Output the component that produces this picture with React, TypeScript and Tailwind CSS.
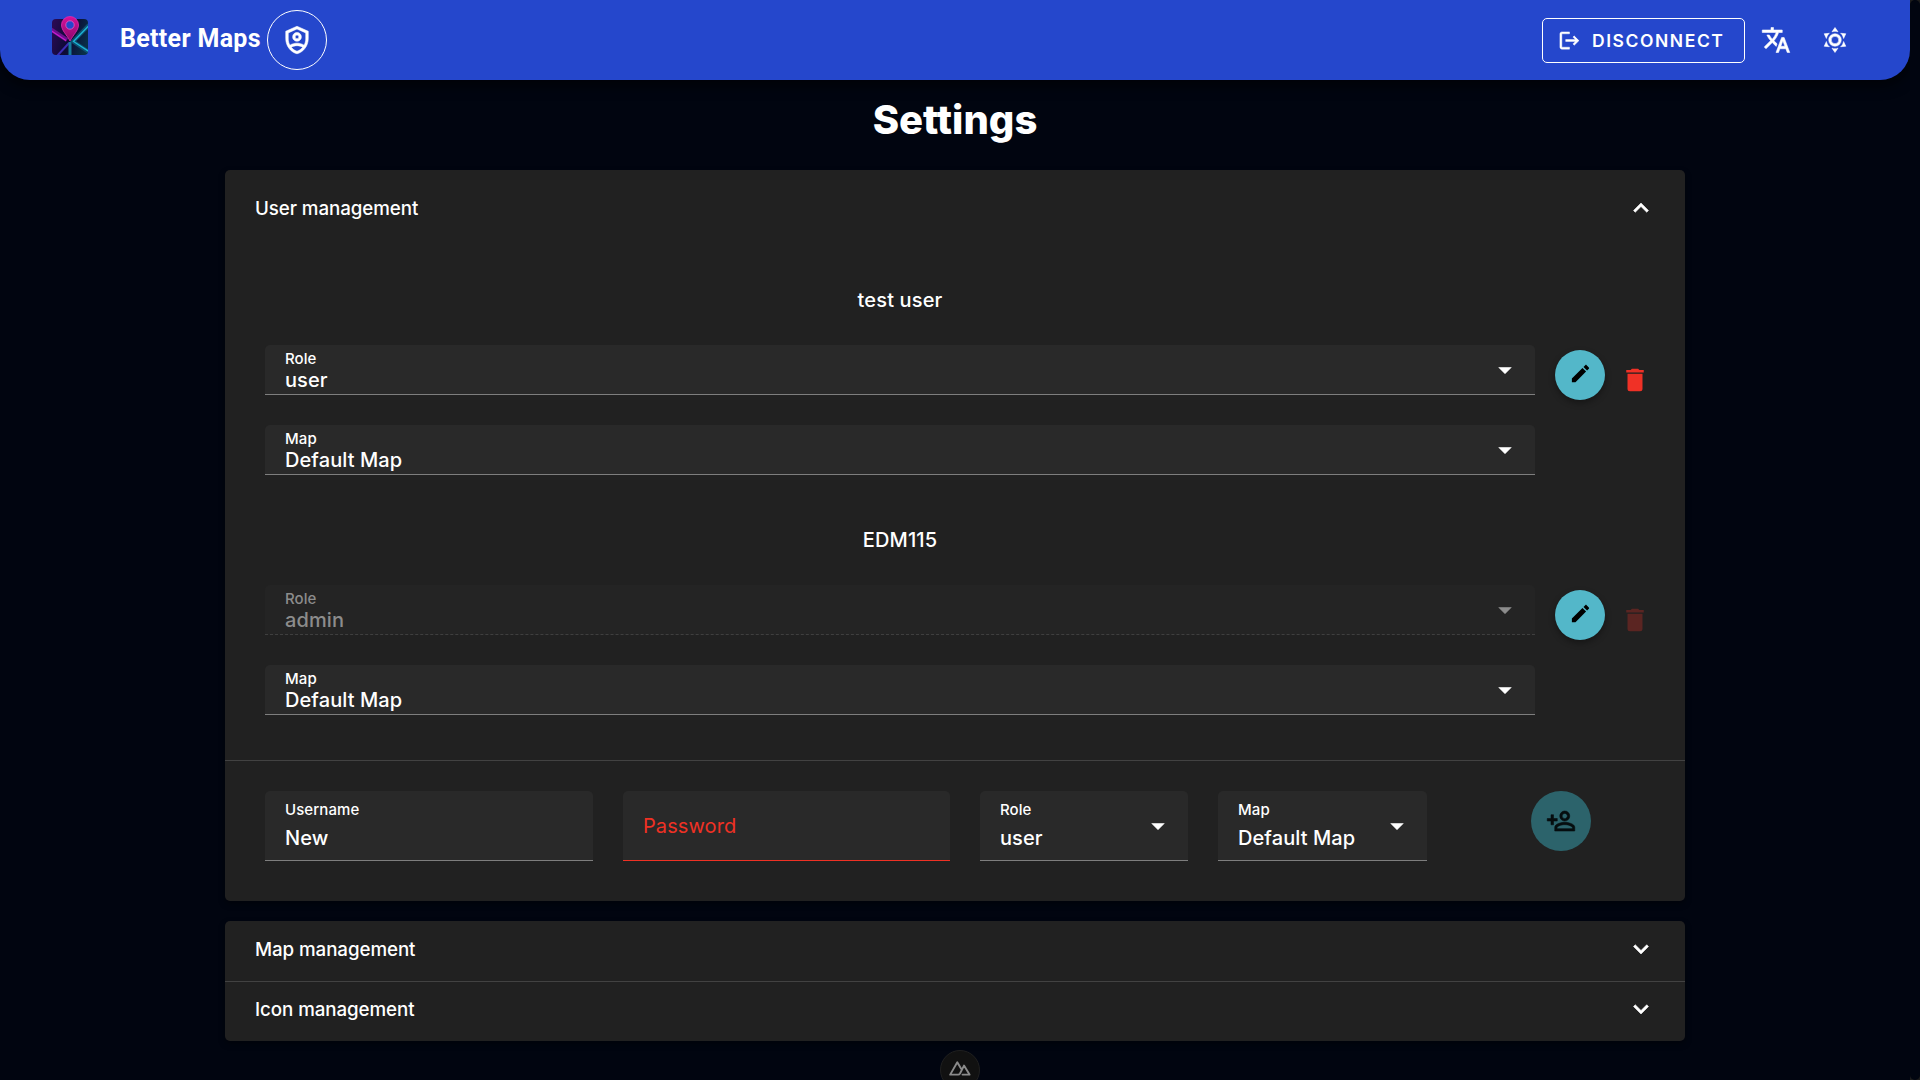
import type { ReactNode } from "react";

const icons = {
  shield:
    "M21,11C21,16.55 17.16,21.74 12,23C6.84,21.74 3,16.55 3,11V5L12,1L21,5V11M12,3.18L5,6.3V11.22C5,12.92 5.5,14.65 6.35,16.18C8,14.94 10.74,14.5 12,14.5C13.26,14.5 16,14.94 17.65,16.18C18.5,14.65 19,12.92 19,11.22V6.3L12,3.18M12,6A3.5,3.5 0 0,1 15.5,9.5A3.5,3.5 0 0,1 12,13A3.5,3.5 0 0,1 8.5,9.5A3.5,3.5 0 0,1 12,6M12,8A1.5,1.5 0 0,0 10.5,9.5A1.5,1.5 0 0,0 12,11A1.5,1.5 0 0,0 13.5,9.5A1.5,1.5 0 0,0 12,8M12,16.5C10.43,16.5 8.37,17.11 7.47,17.84C8.7,19.38 10.3,20.55 12,21C13.7,20.55 15.29,19.38 16.53,17.84C15.64,17.11 13.57,16.5 12,16.5Z",
  logout:
    "M17 7L15.59 8.41L18.17 11H8V13H18.17L15.59 15.58L17 17L22 12M4 5H12V3H4C2.9 3 2 3.9 2 5V19C2 20.1 2.9 21 4 21H12V19H4V5Z",
  translate:
    "M12.87,15.07L10.33,12.56L10.36,12.53C12.1,10.59 13.34,8.36 14.07,6H17V4H10V2H8V4H1V6H12.17C11.5,7.92 10.44,9.75 9,11.35C8.07,10.32 7.3,9.19 6.69,8H4.69C5.42,9.63 6.42,11.17 7.67,12.56L2.58,17.58L4,19L9,14L12.11,17.11L12.87,15.07M18.5,10H16.5L12,22H14L15.12,19H19.87L21,22H23L18.5,10M15.88,17L17.5,12.67L19.12,17H15.88Z",
  sun: "M12,7A5,5 0 0,1 17,12A5,5 0 0,1 12,17A5,5 0 0,1 7,12A5,5 0 0,1 12,7M12,9A3,3 0 0,0 9,12A3,3 0 0,0 12,15A3,3 0 0,0 15,12A3,3 0 0,0 12,9M12,2L14.39,5.42C13.65,5.15 12.84,5 12,5C11.16,5 10.35,5.15 9.61,5.42L12,2M3.34,7L7.5,6.65C6.9,7.16 6.36,7.78 5.94,8.5C5.5,9.24 5.25,10 5.11,10.79L3.34,7M3.36,17L5.12,13.23C5.26,14 5.53,14.78 5.95,15.5C6.37,16.24 6.91,16.86 7.5,17.37L3.36,17M20.65,7L18.88,10.79C18.74,10 18.47,9.23 18.05,8.5C17.63,7.78 17.1,7.15 16.5,6.64L20.65,7M20.64,17L16.5,17.36C17.09,16.85 17.62,16.22 18.04,15.5C18.46,14.77 18.73,14 18.87,13.21L20.64,17M12,22L9.59,18.56C10.33,18.83 11.14,19 12,19C12.82,19 13.63,18.83 14.37,18.56L12,22Z",
  up: "M7.41,15.41L12,10.83L16.59,15.41L18,14L12,8L6,14L7.41,15.41Z",
  down: "M7.41,8.58L12,13.17L16.59,8.58L18,10L12,16L6,10L7.41,8.58Z",
  menu: "M7,10L12,15L17,10H7Z",
  pencil:
    "M20.71,7.04C21.1,6.65 21.1,6 20.71,5.63L18.37,3.29C18,2.9 17.35,2.9 16.96,3.29L15.12,5.12L18.87,8.87M3,17.25V21H6.75L17.81,9.93L14.06,6.18L3,17.25Z",
  trash:
    "M19,4H15.5L14.5,3H9.5L8.5,4H5V6H19M6,19A2,2 0 0,0 8,21H16A2,2 0 0,0 18,19V7H6V19Z",
  addUser:
    "M15,4A4,4 0 0,0 11,8A4,4 0 0,0 15,12A4,4 0 0,0 19,8A4,4 0 0,0 15,4M15,5.9C16.16,5.9 17.1,6.84 17.1,8C17.1,9.16 16.16,10.1 15,10.1A2.1,2.1 0 0,1 12.9,8A2.1,2.1 0 0,1 15,5.9M4,7V10H1V12H4V15H6V12H9V10H6V7H4M15,13C12.33,13 7,14.33 7,17V20H23V17C23,14.33 17.67,13 15,13M15,14.9C17.97,14.9 21.1,16.36 21.1,17V18.1H8.9V17C8.9,16.36 12,14.9 15,14.9Z",
};

function Icon({
  name,
  bold,
  className = "size-[30px]",
}: {
  name: keyof typeof icons;
  bold?: boolean;
  className?: string;
}) {
  return (
    <svg
      viewBox="0 0 24 24"
      fill="currentColor"
      stroke={bold ? "currentColor" : "none"}
      strokeWidth={0.45}
      className={`shrink-0 ${className}`}
    >
      <path d={icons[name]} />
    </svg>
  );
}

function Logo() {
  return (
    <svg viewBox="0 0 36 39" className="h-[39px] w-9 shrink-0">
      <defs>
        <linearGradient id="tile" x1="0" x2="1" y1="0.3" y2="0.6">
          <stop offset="0" stopColor="#2a0a52" />
          <stop offset="0.5" stopColor="#0c0a35" />
          <stop offset="1" stopColor="#083048" />
        </linearGradient>
        <linearGradient id="pin" x1="0" x2="0" y1="0" y2="1">
          <stop offset="0" stopColor="#d8109a" />
          <stop offset="1" stopColor="#8a0a6c" />
        </linearGradient>
        <clipPath id="tileClip">
          <rect y="3" width="36" height="36" rx="4" />
        </clipPath>
      </defs>
      <g clipPath="url(#tileClip)">
        <rect y="3" width="36" height="36" fill="url(#tile)" />
        <path d="M-1 13.500L15 24" stroke="#6c0f8e" strokeWidth="4" />
        <path d="M-1 14.500L14 24.500" stroke="#c81fd0" strokeWidth="1.2" />
        <path d="M17 27L5 40" stroke="#3c2bb5" strokeWidth="2" />
        <path d="M18 26V39" stroke="#177a9c" strokeWidth="3" />
        <path d="M37 9L21 25.500L37 36" stroke="#0d4f70" strokeWidth="4" fill="none" />
        <path d="M37 9.500L21.500 25.500L37 35.500" stroke="#1cb4d4" strokeWidth="1.3" fill="none" />
      </g>
      <path
        d="M18 25C15 19 9.500 14.500 9.500 9A8.500 8.500 0 0 1 26.500 9C26.500 14.500 21 19 18 25Z"
        fill="url(#pin)"
        stroke="#e02cb0"
        strokeWidth="0.8"
      />
      <circle cx="18" cy="9" r="4.200" fill="#2547cc" stroke="#ee5cc0" strokeWidth="0.8" />
    </svg>
  );
}

function Field({
  label,
  value,
  select,
  dense,
  disabled,
  error,
  className = "",
}: {
  label: string;
  value?: string;
  select?: boolean;
  dense?: boolean;
  disabled?: boolean;
  error?: boolean;
  className?: string;
}) {
  const tone = disabled
    ? "border-dashed border-[#3f3f3f] bg-[#242424] text-[#8c8c8c]"
    : error
      ? "border-[#ef3124] bg-[#292929] text-[#ef3124]"
      : "border-[#7e7e7e] bg-[#292929] text-white";
  const pad = dense ? "h-[50px] pt-[4px]" : "h-[70px] pt-[9px]";
  return (
    <div
      className={`flex shrink-0 justify-between rounded-t-[5px] border-b pr-[15px] pl-[20px] font-medium tracking-[0.09px] ${tone} ${pad} ${className}`}
    >
      {value ? (
        <div className="flex flex-col">
          <span className="text-[15px] leading-[19px]">{label}</span>
          <span className={dense ? "text-[20px] leading-[24px]" : "mt-[7px] text-[20px] leading-[25px]"}>{value}</span>
        </div>
      ) : (
        <span className="pt-[14px] text-[20px] leading-[25px] font-normal">{label}</span>
      )}
      {select && <Icon name="menu" bold className={dense ? "mt-[6px] size-[30px]" : "mt-[11px] size-[30px]"} />}
    </div>
  );
}

function UserBlock({ name, role, locked, className }: { name: string; role: string; locked?: boolean; className: string }) {
  return (
    <div className={`flex px-[40px] ${className}`}>
      <div className="w-[1270px] shrink-0">
        <div className="mb-[32px] text-center text-[20px] leading-[25px] font-medium tracking-[0.15px]">{name}</div>
        <Field label="Role" value={role} select dense disabled={locked} />
        <Field label="Map" value="Default Map" select dense className="mt-[30px]" />
      </div>
      <div className="flex shrink-0 items-start pt-[62px] pl-[20px]">
        <button className="flex size-[50px] items-center justify-center rounded-full bg-[#53b7c9] text-black shadow-[0_3px_6px_rgba(0,0,0,0.35)]">
          <Icon name="pencil" className="mb-[3px] size-[23px]" />
        </button>
        <Icon name="trash" className={locked ? "mt-[15px] ml-[15px] size-[30px] text-[#5b2522]" : "mt-[15px] ml-[15px] size-[30px] text-[#f03126]"} />
      </div>
    </div>
  );
}

function Panel({ children, className = "" }: { children: ReactNode; className?: string }) {
  return (
    <section
      className={`w-[1460px] overflow-hidden rounded-[5px] bg-[#212121] shadow-[0_3px_6px_rgba(0,0,0,0.4)] ${className}`}
    >
      {children}
    </section>
  );
}

function PanelTitle({ title, icon }: { title: string; icon: "up" | "down" }) {
  return (
    <div className="flex h-[56px] items-center justify-between pr-[29px] pl-[30px] text-[18.75px] leading-[24px] font-medium tracking-[-0.08px]">
      <span className="pt-px">{title}</span>
      <Icon name={icon} bold />
    </div>
  );
}

export default function App() {
  return (
    <div className="relative flex h-[1080px] w-[1920px] overflow-hidden bg-[#010510] font-['Inter',sans-serif] text-white">
      <div className="flex w-[1910px] flex-col items-center">
        <header className="flex h-[80px] w-full shrink-0 items-start rounded-b-[30px] bg-[#2547cc] pl-[52px] shadow-[0_5px_12px_2px_rgba(0,0,0,0.5)]">
          <div className="mt-[16px]">
            <Logo />
          </div>
          <div className="mt-[23px] ml-[32px] w-[147px] font-['Roboto',sans-serif] text-[25px] leading-[31px] font-bold tracking-[0.0125em] whitespace-nowrap">
            Better Maps
          </div>
          <button className="mt-[10px] flex size-[60px] items-center justify-center rounded-full border border-white">
            <Icon name="shield" bold />
          </button>
          <button className="mt-[18px] ml-auto flex h-[45px] w-[203px] items-center rounded-[5px] border border-white pl-[15px]">
            <Icon name="logout" bold className="mb-[1px] size-[23px]" />
            <span className="ml-[11px] text-[17.5px] leading-none font-semibold tracking-[0.0892857em]">DISCONNECT</span>
          </button>
          <Icon name="translate" bold className="mt-[25px] ml-[16px] size-[30px]" />
          <Icon name="sun" bold className="mt-[25px] mr-[60px] ml-[29px] size-[30px]" />
        </header>

        <h1 className="mt-[15px] h-[75px] text-[40px] leading-[50px] font-extrabold">Settings</h1>

        <Panel className="h-[731px] shrink-0 pt-[10px]">
          <PanelTitle title="User management" icon="up" />
          <UserBlock name="test user" role="user" className="mt-[52px]" />
          <UserBlock name="EDM115" role="admin" locked className="mt-[53px]" />
          <div className="mt-[45px] flex border-t border-[#424242] px-[40px] pt-[30px]">
            <Field label="Username" value="New" className="w-[328px]" />
            <Field label="Password" error className="ml-[30px] w-[327px]" />
            <Field label="Role" value="user" select className="ml-[30px] w-[208px]" />
            <Field label="Map" value="Default Map" select className="ml-[30px] w-[209px]" />
            <button className="ml-[104px] flex size-[60px] items-center justify-center rounded-full bg-[#2c636b] text-[#060d0e]">
              <Icon name="addUser" bold />
            </button>
          </div>
        </Panel>

        <Panel className="mt-[20px] h-[120px] shrink-0">
          <div className="h-[60px]">
            <PanelTitle title="Map management" icon="down" />
          </div>
          <div className="h-[60px] border-t border-[#424242]">
            <div className="-mt-px">
              <PanelTitle title="Icon management" icon="down" />
            </div>
          </div>
        </Panel>
      </div>

      <div className="w-[10px] bg-[#1c1c1c]">
        <div className="h-full rounded-[5px] bg-[#010510]" />
      </div>

      <div className="absolute top-[1050px] left-[940px] flex size-[40px] justify-center rounded-full border border-[#1f1f1f] bg-[#111111] pt-[10px] text-[#8b8b8b]">
        <svg viewBox="0 0 22 15" className="h-[15px] w-[22px]" fill="none" stroke="currentColor" strokeWidth="1.9" strokeLinejoin="round" strokeLinecap="round">
          <path d="M12 7.500L8.300 1.200L1.200 13.600H9.200Q10.300 13.600 11 12.500L15 4.600L20.500 13.600H13.500" />
        </svg>
      </div>
    </div>
  );
}
